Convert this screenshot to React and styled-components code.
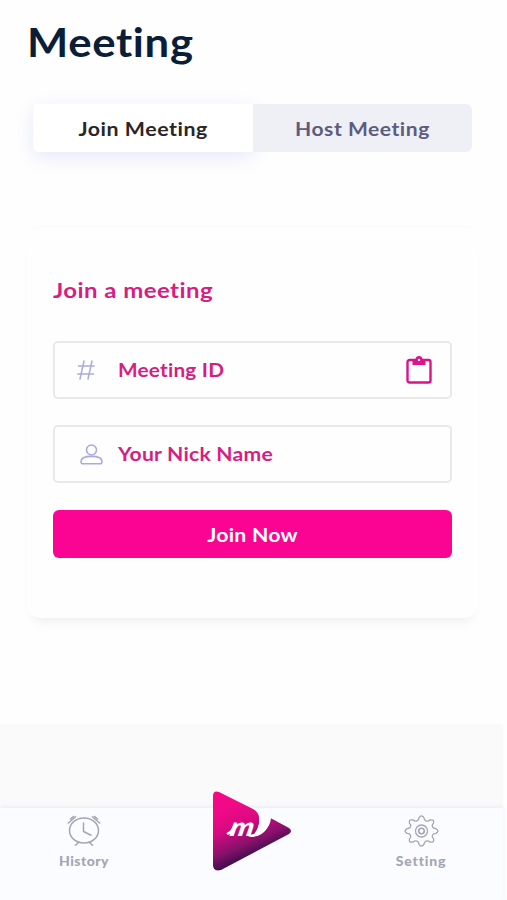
import React from "react";
import styled, { createGlobalStyle } from "styled-components";

const GlobalStyle = createGlobalStyle`
  *, *::before, *::after { box-sizing: border-box; }
  body { margin: 0; background: #fefefe; font-family: Lato, "Open Sans", sans-serif; }
  button { border: 0; padding: 0; font-family: inherit; cursor: pointer; }
`;

const Screen = styled.div`
  height: 900px;
  overflow: hidden;
  display: flex;
  flex-direction: column;
`;

const Content = styled.main`
  height: 724px;
  padding: 18px 29px 0 27px;
`;

const WideText = styled.span`
  display: inline-block;
  transform: scaleX(${(p) => p.$scale});
  transform-origin: ${(p) => p.$origin || "left"} center;
`;

const Title = styled.h1`
  margin: 0;
  height: 48px;
  font-size: 39.5px;
  line-height: 48px;
  font-weight: 700;
  letter-spacing: 0.6px;
  color: #0a1e38;
`;

const Tabs = styled.div`
  display: flex;
  width: 439px;
  height: 48px;
  margin: 38px 0 0 6px;
`;

const Tab = styled.button`
  width: 220px;
  height: 48px;
  font-size: 19.5px;
  font-weight: 700;
  letter-spacing: 0.5px;
  color: ${(p) => (p.$active ? "#29262a" : "#5e5b80")};
  background: ${(p) => (p.$active ? "#fff" : "#eff0f5")};
  border-radius: ${(p) => (p.$active ? "5px 0 0 5px" : "0 6px 6px 0")};
  box-shadow: ${(p) => (p.$active ? "0 5px 18px rgba(86, 100, 225, 0.14)" : "none")};
`;

const Card = styled.section`
  width: 451px;
  height: 392px;
  margin-top: 74px;
  padding: 50px 26px 0;
  border-top: 1px solid #fafafc;
  border-radius: 14px;
  background: #fefefe;
  box-shadow: 0 9px 9px -5px rgba(70, 80, 130, 0.08);
`;

const CardTitle = styled.h2`
  margin: 0 0 37px;
  height: 27px;
  font-size: 21.5px;
  line-height: 27px;
  font-weight: 700;
  letter-spacing: 0.4px;
  color: #d71d83;
`;

const Field = styled.div`
  display: flex;
  align-items: center;
  width: 399px;
  height: 58px;
  margin-bottom: ${(p) => (p.$last ? 27 : 26)}px;
  padding: 0 18px 0 22px;
  border: 2px solid #e9e9eb;
  border-radius: 5px;
`;

const FieldIcon = styled.span`
  display: flex;
  width: 41px;
  padding-left: ${(p) => p.$inset}px;
`;

const FieldLabel = styled.span`
  flex: 1;
  font-size: 19.5px;
  line-height: 28px;
  font-weight: 700;
  letter-spacing: 0.2px;
  color: #d71d83;
`;

const JoinButton = styled.button`
  display: block;
  width: 399px;
  height: 48px;
  border-radius: 6px;
  background: #fc0493;
  color: #fff;
  font-size: 19.5px;
  font-weight: 700;
  letter-spacing: 0.2px;
`;

const Footer = styled.footer`
  width: 503px;
  height: 176px;
  padding-top: 84px;
  background: #fafafb;
`;

const NavBar = styled.nav`
  display: flex;
  justify-content: space-between;
  height: 92px;
  padding: 7px 30px 0 32px;
  background: #fafcff;
  box-shadow: 0 -1px 4px rgba(130, 130, 220, 0.14);
`;

const NavItem = styled.a`
  display: flex;
  flex-direction: column;
  align-items: center;
  width: 104px;
  color: #a3a6b2;
`;

const NavLabel = styled.span`
  margin-top: 4px;
  font-size: 14px;
  line-height: 20px;
  font-weight: 900;
  letter-spacing: ${(p) => p.$spacing}px;
`;

const Brand = styled.div`
  width: 84px;
  margin-top: -25px;
`;

const HashIcon = () => (
  <svg width="18" height="20" viewBox="0 0 18 20" fill="none" stroke="#aaaadd" strokeWidth="1.5" strokeLinecap="round">
    <path d="M7 1 3 19M15 1l-4 18M1.5 6H17M.7 14h15.8" />
  </svg>
);

const PersonIcon = () => (
  <svg width="23" height="21" viewBox="0 0 23 21" fill="none" stroke="#aaaadd" strokeWidth="1.6" strokeLinejoin="round">
    <circle cx="11.5" cy="6" r="5" />
    <path d="M1 17.5c0-3.5 5-5.1 10.5-5.1S22 14 22 17.5c0 1.600-.5 2.300-1.800 2.300H2.800C1.500 19.800 1 19.100 1 17.500Z" />
  </svg>
);

const ClipboardIcon = () => (
  <svg width="26" height="28" viewBox="0 0 26 28">
    <rect x="1.500" y="4" width="23" height="22.500" rx="2" fill="none" stroke="#dc118b" strokeWidth="2.400" />
    <path fill="#dc118b" d="M6.500 3h3C9.800 1.300 11 0 13 0s3.200 1.300 3.500 3h3v6h-13Z" />
    <circle cx="13" cy="3.900" r="1.200" fill="#fff" />
  </svg>
);

const ClockIcon = () => (
  <svg width="34" height="32" viewBox="0 0 34 32" fill="none" stroke="currentColor" strokeWidth="1.500">
    <ellipse cx="17" cy="15.500" rx="14.500" ry="12.500" />
    <path d="M16.500 7.500v9l8 4M12 27l-4 3.700M22 27l4 3.700M.8 8.500 9 1.500M3 4.500 7 1M33.200 8.500 25 1.500M31 4.500 27 1" />
  </svg>
);

const teethAngles = Array.from({ length: 8 }, (_, i) => i * 45);
const polar = (radius, degrees) => {
  const a = (degrees * Math.PI) / 180;
  return `${(17.5 + radius * Math.cos(a)).toFixed(2)} ${(16 + radius * 0.92 * Math.sin(a)).toFixed(2)}`;
};
const gearPath =
  teethAngles
    .map((d, i) => `${i ? "L" : "M"}${polar(14.6, d - 10)}Q${polar(18.6, d)} ${polar(14.6, d + 10)}C${polar(11.2, d + 13)} ${polar(11.2, d + 32)} ${polar(14.6, d + 35)}`)
    .join("") + "Z";

const GearIcon = () => (
  <svg width="35" height="32" viewBox="0 0 35 32" fill="none" stroke="currentColor" strokeWidth="1.300" strokeLinejoin="round">
    <path d={gearPath} />
    <circle cx="17.500" cy="16" r="6" />
    <circle cx="17.500" cy="16" r="2.800" strokeWidth="1.600" />
  </svg>
);

const BrandMark = () => (
  <svg width="82" height="82" viewBox="0 0 82 82">
    <defs>
      <linearGradient id="brandFill" x1="22" y1="16" x2="43" y2="65" gradientUnits="userSpaceOnUse">
        <stop offset="0" stopColor="#f10986" />
        <stop offset=".35" stopColor="#d90a80" />
        <stop offset=".75" stopColor="#87116b" />
        <stop offset="1" stopColor="#420d4d" />
      </linearGradient>
    </defs>
    <path fill="url(#brandFill)" d="M2 6Q2 0 8 2L41 18.500Q47 21 48 27C49 34 47 39 44 43L46 45C54 42 58 36 59.500 28L78 38Q82 41 78 44L10 80Q2 82 2 75Z" />
    <path fill="#fff" d="M48 26C49 34 47 39 43.500 43.500L41 45.500C47 49 59 40 60 28L48 22Z" />
    <path fill="none" stroke="#fff" strokeWidth="2.600" strokeLinecap="round" d="M17 43.500q4-1 7-9M37 44q2 3 7 1" />
    <text transform="translate(18 46) scale(1.150 1) skewX(-10)" fill="#fff" fontFamily="Lato, sans-serif" fontSize="26" fontWeight="900" fontStyle="italic">m</text>
  </svg>
);

export default function App() {
  return (
    <>
      <GlobalStyle />
      <Screen>
        <Content>
          <Title><WideText $scale={1.105}>Meeting</WideText></Title>
          <Tabs>
            <Tab $active><WideText $scale={1.095} $origin="center">Join Meeting</WideText></Tab>
            <Tab><WideText $scale={1.08} $origin="center">Host Meeting</WideText></Tab>
          </Tabs>
          <Card>
            <CardTitle><WideText $scale={1.115}>Join a meeting</WideText></CardTitle>
            <Field>
              <FieldIcon $inset={0}><HashIcon /></FieldIcon>
              <FieldLabel><WideText $scale={1.065}>Meeting ID</WideText></FieldLabel>
              <ClipboardIcon />
            </Field>
            <Field $last>
              <FieldIcon $inset={3}><PersonIcon /></FieldIcon>
              <FieldLabel><WideText $scale={1.085}>Your Nick Name</WideText></FieldLabel>
            </Field>
            <JoinButton><WideText $scale={1.09} $origin="center">Join Now</WideText></JoinButton>
          </Card>
        </Content>
        <Footer>
          <NavBar>
            <NavItem>
              <ClockIcon />
              <NavLabel $spacing={0.5}>History</NavLabel>
            </NavItem>
            <Brand><BrandMark /></Brand>
            <NavItem>
              <GearIcon />
              <NavLabel $spacing={0.8}>Setting</NavLabel>
            </NavItem>
          </NavBar>
        </Footer>
      </Screen>
    </>
  );
}
